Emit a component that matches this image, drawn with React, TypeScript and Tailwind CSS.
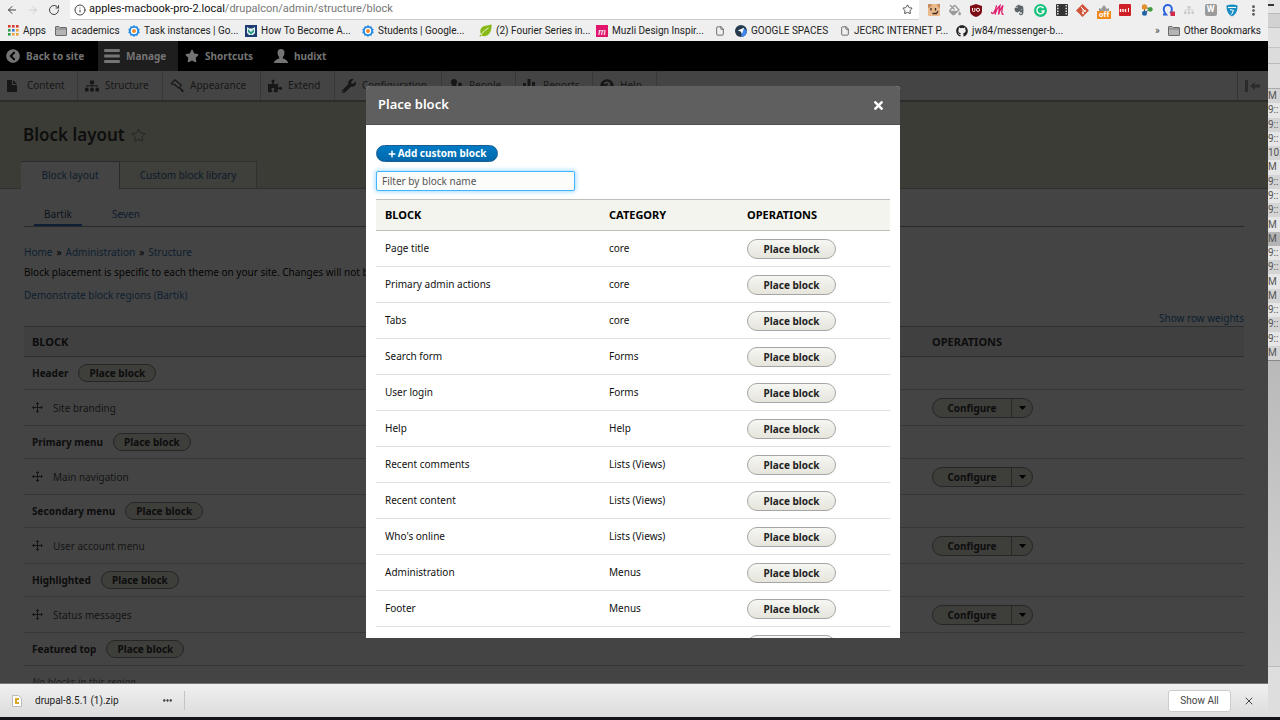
import type { ReactNode } from 'react';
import { ArrowLeft, ArrowRight, Ellipsis, EllipsisVertical, File, Info, RotateCw, Star, X } from 'lucide-react';
import {
  FaChevronCircleLeft,
  FaEvernote,
  FaFillDrip,
  FaGitAlt,
  FaGithub,
  FaPlus,
  FaPuzzlePiece,
  FaQuestionCircle,
  FaSitemap,
  FaStar,
  FaTimes,
  FaWrench,
} from 'react-icons/fa';

const FolderIcon = () => (
  <svg viewBox="0 0 12 10" className="h-2.5 w-3">
    <path d="M.5 9V1Q.5.5 1 .5h3l1 1h6q.5 0 .5.5v7q0 .5-.5.5H1Q.5 9.5.5 9z" fill="#b4b4b4" stroke="#6a6a6a" />
    <path d="M1 3h10" stroke="#6a6a6a" strokeWidth=".7" />
  </svg>
);

const AppsIcon = () => (
  <svg viewBox="0 0 11 11" className="size-[11px]">
    {['#d93c2f', '#d93c2f', '#d93c2f', '#2f9e4f', '#3c78d8', '#e8a33d', '#2f9e4f', '#e8a33d', '#e8a33d'].map((fill, i) => (
      <rect key={i} x={(i % 3) * 4} y={Math.floor(i / 3) * 4} width="2.6" height="2.6" fill={fill} />
    ))}
  </svg>
);

const GearIcon = () => (
  <svg viewBox="0 0 24 24" className="size-3">
    <path d="M12 0l3 3 4-.5 1 4 3.500 2-1.500 3.500 1.500 3.500-3.500 2-1 4-4-.5-3 3-3-3-4 .5-1-4-3.500-2L2 12 .5 8.500l3.500-2 1-4L9 3z" fill="#1e88e5" />
    <circle cx="12" cy="12" r="6.5" fill="#fff" />
    <circle cx="12" cy="12" r="4" fill="#ef8a2b" />
  </svg>
);

const OwlIcon = () => (
  <svg viewBox="0 0 12 12" className="size-3">
    <rect width="12" height="12" fill="#1d3c72" />
    <path d="M2 2l2.500 1.500h3L10 2v6L8 10H4L2 8z" fill="#e6f4f1" />
    <path d="M3 4l3 3 3-3v3L6 9.500 3 7z" fill="#2b9a87" />
  </svg>
);

const LeafIcon = () => (
  <svg viewBox="0 0 13 13" className="size-[13px]">
    <path d="M12.500.500Q13 8 9 11q-3 2-6.500.500L1 13l-.5-1L2 10.500Q-.5 4 5.500 2 9 1 12.500.500z" fill="#86b918" />
    <path d="M2 11Q5 6 9.500 4" stroke="#e9f5c8" fill="none" />
  </svg>
);

const MuzliIcon = () => (
  <span className="flex size-3 items-center justify-center bg-[#e0156b] font-['Liberation_Serif',serif] text-[11px] leading-3 text-white italic">m</span>
);

const SpacesIcon = () => (
  <svg viewBox="0 0 12 12" className="size-3">
    <circle cx="6" cy="6" r="6" fill="#263c4e" />
    <path d="M6 12a6 6 0 0 0 6-6L8 2.500z" fill="#3f86ee" />
    <path d="M2.800 5.500L9 2.800 7 9 5.700 6.500z" fill="#fff" />
  </svg>
);

const PageIcon = () => <File className="size-[10px] text-[#555]" />;

const bookmarks = [
  { label: 'Apps', icon: <AppsIcon />, width: 'w-[47px]' },
  { label: 'academics', icon: <FolderIcon />, width: 'w-[73px]' },
  { label: 'Task instances | Go...', icon: <GearIcon />, width: 'w-[117px]' },
  { label: 'How To Become A...', icon: <OwlIcon />, width: 'w-[117px]' },
  { label: 'Students | Google...', icon: <GearIcon />, width: 'w-[117px]' },
  { label: '(2) Fourier Series in...', icon: <LeafIcon />, width: 'w-[117px]' },
  { label: 'Muzli Design Inspir...', icon: <MuzliIcon />, width: 'w-[119px]' },
  { label: '', icon: <PageIcon />, width: 'w-[20px]' },
  { label: 'GOOGLE SPACES', icon: <SpacesIcon />, width: 'w-[105px]' },
  { label: 'JECRC INTERNET P...', icon: <PageIcon />, width: 'w-[116px]' },
  { label: 'jw84/messenger-b...', icon: <FaGithub className="size-3" />, width: 'w-[117px]' },
];

const extensions: ReactNode[] = [
  <svg viewBox="0 0 12 12" className="size-3">
    <rect width="12" height="12" rx="1" fill="#eab98c" />
    <path d="M0 0h4L3 3 0 4zM9 0h3v4l-2-1z" fill="#c98d5e" />
    <path d="M3 4v2.500M7.500 4v2.500M4.500 9.500h4L10 7" stroke="#3b2a22" strokeWidth="1.3" fill="none" />
  </svg>,
  <FaFillDrip className="size-3 text-[#9b9b9b]" />,
  <svg viewBox="0 0 12 13" className="h-[13px] w-3">
    <path d="M6 0l6 2v5q0 4-6 6Q0 11 0 7V2z" fill="#7d0c15" />
    <path d="M2.500 4v2.500q0 1 1.200 1t1.200-1V4" stroke="#fff" fill="none" />
    <circle cx="8" cy="5.8" r="1.6" stroke="#fff" fill="none" />
  </svg>,
  <svg viewBox="0 0 13 12" className="h-3 w-[13px]">
    <path d="M.5 8Q1 10.500 2.500 9 5 6 5.500 1.500 4.500 5 4 10.500 6 4 9 1.500 8 5 7.500 10.500 9 5 12 1.500 10.500 6 11 9.500q.5 1.500 1.500.500" stroke="#e0206f" strokeWidth="1.3" fill="none" />
  </svg>,
  <FaEvernote className="size-3 text-[#5b6469]" />,
  <svg viewBox="0 0 13 13" className="size-[13px]">
    <circle cx="6.5" cy="6.5" r="6.5" fill="#15c27c" />
    <path d="M9.500 4.200A3.600 3.600 0 1 0 10 7H7.500" stroke="#fff" strokeWidth="1.4" fill="none" />
  </svg>,
  <svg viewBox="0 0 12 12" className="size-3">
    <rect width="12" height="12" rx="1" fill="#333" />
    <path d="M1.800 1v10M10.200 1v10" stroke="#fff" strokeWidth="1.3" strokeDasharray="1.5 1.2" />
  </svg>,
  <svg viewBox="0 0 13 13" className="size-[13px]">
    <path d="M6.500 0L13 6.500 6.500 13 0 6.500z" fill="#d0533a" />
    <path d="M5 3l2 2v4.500M7 5l2 2" stroke="#fff" fill="none" />
    <circle cx="7" cy="9.3" r="1" fill="#fff" />
    <circle cx="9" cy="7" r="1" fill="#fff" />
  </svg>,
  <span className="flex flex-col items-center pt-1">
    <svg viewBox="0 0 10 6" className="h-1.5 w-2.5">
      <path d="M0 6V3l2 1 1.500-2L5 0l1.500 2L8 4l2-1v3z" fill="#999" />
    </svg>
    <span className="bg-[#f28a1b] px-0.5 text-[8px] leading-2 font-bold text-white">off</span>
  </span>,
  <svg viewBox="0 0 12 12" className="size-3">
    <rect width="12" height="12" rx="1" fill="#cf2027" />
    <path d="M1.500 5v3M4 5v3M6.500 5v3" stroke="#fff" strokeWidth="1.4" />
    <path d="M9.500 4v4" stroke="#fff" />
  </svg>,
  <svg viewBox="0 0 12 12" className="size-3">
    <path d="M3.500 3v6L9 5z" stroke="#555" fill="none" />
    <circle cx="3.5" cy="3" r="2.7" fill="#e2902c" />
    <circle cx="9.3" cy="5.3" r="2.4" fill="#3f9a44" />
    <circle cx="3.5" cy="9.2" r="2.5" fill="#2364a8" />
  </svg>,
  <svg viewBox="0 0 13 12" className="h-3 w-[13px]">
    <path d="M1 10.500h3Q1.500 7.500 1.800 5a4 4 0 0 1 8 0q.2 2-1.500 4.500" stroke="#2a62e0" strokeWidth="2" fill="none" />
    <rect x="8.5" y="7.5" width="4.5" height="4.5" fill="#d02a4a" />
  </svg>,
  <FaSitemap className="size-[10px] text-[#c9c9c9]" />,
  <span className="flex size-3 items-center justify-center rounded-xs bg-[#9b9b9b] text-[9px] font-bold text-white">W</span>,
  <svg viewBox="0 0 12 13" className="h-[13px] w-3">
    <path d="M.5 1.500Q6-.5 11.500 1.500 12 9 6 12.500 0 9 .5 1.500z" fill="#1b8fc4" />
    <path d="M2 3.500h8M4 5.500l3.500 1-2 4" stroke="#fff" fill="none" />
  </svg>,
  <EllipsisVertical className="size-[13px] text-[#444]" strokeWidth={3} />,
];

const ContentIcon = () => (
  <svg viewBox="0 0 10 12" className="h-3 w-2.5" fill="currentColor">
    <path d="M0 0h5v5h5v7H0zM6 0l4 4H6z" />
  </svg>
);

const MenuIcon = () => (
  <svg viewBox="0 0 16 14" className="h-[14px] w-4" fill="currentColor">
    <path d="M1 0h14q1 0 1 1.500T15 3H1Q0 3 0 1.500T1 0zM1 5.500h14q1 0 1 1.500t-1 1.500H1Q0 8.500 0 7t1-1.500zM1 11h14q1 0 1 1.500T15 14H1q-1 0-1-1.500T1 11z" />
  </svg>
);

const PaintIcon = () => (
  <svg viewBox="0 0 14 14" className="size-[14px]" fill="currentColor">
    <path d="M5 0l7 6-3 4-2.500-2L4 6 0 5zM5 1.800L2 4.600l3 .400 4 3.600L10.400 6.200z" />
    <path d="M9.500 9.500l1-1L14 12l-1.500 1.500z" />
  </svg>
);

const PeopleIcon = () => (
  <svg viewBox="0 0 14 14" className="size-[14px]" fill="currentColor">
    <circle cx="5" cy="3" r="3" />
    <path d="M3.500 5h3l3 6v3H1v-3z" />
    <circle cx="11" cy="5.5" r="2" />
    <path d="M10 8h2.500l1.500 3v3h-3z" />
  </svg>
);

const ChartIcon = () => (
  <svg viewBox="0 0 12 14" className="h-[14px] w-3" fill="currentColor">
    <path d="M0 4h3v10H0zM4.500 0h3v14h-3zM9 3h3v11H9z" />
  </svg>
);

const UserIcon = () => (
  <svg viewBox="0 0 14 14" className="size-[14px]" fill="currentColor">
    <path d="M7 0q3.500 0 3.500 3.800Q10.500 7 8.800 8.300v1.200Q14 11 14 14H0q0-3 5.200-4.500V8.300Q3.500 7 3.500 3.800 3.500 0 7 0z" />
  </svg>
);

const tray = [
  { label: 'Content', icon: <ContentIcon />, width: 'w-[78px]' },
  { label: 'Structure', icon: <FaSitemap className="size-[14px]" />, width: 'w-[85px]' },
  { label: 'Appearance', icon: <PaintIcon />, width: 'w-[98px]' },
  { label: 'Extend', icon: <FaPuzzlePiece className="size-[14px]" />, width: 'w-[74px]' },
  { label: 'Configuration', icon: <FaWrench className="size-[14px]" />, width: 'w-[107px]' },
  { label: 'People', icon: <PeopleIcon />, width: 'w-[74px]' },
  { label: 'Reports', icon: <ChartIcon />, width: 'w-[77px]' },
  { label: 'Help', icon: <FaQuestionCircle className="size-[14px]" />, width: 'w-[64px]' },
];

const regions = [
  { name: 'Header', block: 'Site branding' },
  { name: 'Primary menu', block: 'Main navigation' },
  { name: 'Secondary menu', block: 'User account menu' },
  { name: 'Highlighted', block: 'Status messages' },
  { name: 'Featured top', block: null },
];

const blocks = [
  ['Page title', 'core'],
  ['Primary admin actions', 'core'],
  ['Tabs', 'core'],
  ['Search form', 'Forms'],
  ['User login', 'Forms'],
  ['Help', 'Help'],
  ['Recent comments', 'Lists (Views)'],
  ['Recent content', 'Lists (Views)'],
  ["Who's online", 'Lists (Views)'],
  ['Administration', 'Menus'],
  ['Footer', 'Menus'],
  ['', ''],
];

const times = ['M', '9::', '9::', '9::', '10:', 'M', '9::', '9::', '9::', 'M', 'M', '9::', '9::', 'M', 'M', '9::', '9::', '9::', 'M'];

const BrowserBar = () => (
  <header className="shrink-0 bg-[#efefef] text-[10px] text-[#222]">
    <div className="flex h-5 items-center">
      <nav className="flex w-[70px] items-center gap-[9px] pl-1.5">
        <button aria-label="Back"><ArrowLeft className="size-3 text-[#444]" /></button>
        <button aria-label="Forward"><ArrowRight className="size-3 text-[#ccc]" /></button>
        <button aria-label="Reload"><RotateCw className="size-3 text-[#444]" /></button>
      </nav>
      <div className="flex h-5 flex-1 items-center gap-[3px] rounded-b-xs border-b border-[#ccc] bg-white pr-1.5 pl-1">
        <Info className="size-3 text-[#444]" />
        <p className="flex-1 text-[11px] text-[#777]">
          <span className="text-[#111]">apples-macbook-pro-2.local</span>/drupalcon/admin/structure/block
        </p>
        <Star className="size-[11px] text-[#444]" />
      </div>
      <div className="grid w-[349px] grid-cols-16 pr-1 pl-1">
        {extensions.map((icon, i) => (
          <span key={i} className="flex h-[18px] items-center justify-center">{icon}</span>
        ))}
      </div>
    </div>
    <nav className="flex h-[21px] items-center pl-2">
      {bookmarks.map((item, i) => (
        <a key={i} href="#" className={`flex shrink-0 items-center gap-1 whitespace-nowrap ${item.width}`}>
          {item.icon}
          {item.label}
        </a>
      ))}
      <span className="ml-auto pr-2 text-[#444]">»</span>
      <a href="#" className="flex items-center gap-1 pr-[7px]">
        <FolderIcon />
        Other Bookmarks
      </a>
    </nav>
  </header>
);

const Toolbar = () => (
  <nav className="flex h-[30px] items-center bg-black text-[10px] font-bold text-[#747474]">
    <a href="#" className="flex w-[98px] items-center gap-1.5 pl-1.5">
      <FaChevronCircleLeft className="size-[14px]" />
      Back to site
    </a>
    <a href="#" className="flex h-full w-20 items-center gap-1.5 bg-[#1e1e1e] pl-1.5">
      <MenuIcon />
      Manage
    </a>
    <a href="#" className="flex w-24 items-center gap-1.5 pl-[7px]">
      <FaStar className="size-[14px]" />
      Shortcuts
    </a>
    <a href="#" className="flex items-center gap-1.5">
      <UserIcon />
      hudixt
    </a>
  </nav>
);

const Tray = () => (
  <nav className="flex h-[31px] border-b-2 border-[#2c2c2a] bg-[#444] text-[10px] text-[#171717]">
    {tray.map((item) => (
      <a key={item.label} href="#" className={`flex shrink-0 items-center border-r border-[#383838] pl-[7px] ${item.width}`}>
        <span className="flex w-5">{item.icon}</span>
        {item.label}
      </a>
    ))}
    <button aria-label="Vertical orientation" className="ml-auto flex w-[31px] items-center border-l border-[#333] pl-[7px] text-[#2b2b2b]">
      <svg viewBox="0 0 15 12" className="h-3 w-[15px]" fill="currentColor">
        <path d="M0 0h3v12H0zM5 6l5-4v2.500h5v3h-5V10z" />
      </svg>
    </button>
  </nav>
);

const DragHandle = () => (
  <svg viewBox="0 0 11 11" className="size-[11px]" stroke="#161616" fill="none">
    <path d="M5.500 1v9M1 5.500h9M4 2l1.500-1.500L7 2M4 9l1.500 1.500L7 9M2 4L.5 5.500 2 7M9 4l1.500 1.500L9 7" />
  </svg>
);

const BlockLayout = () => (
  <main>
    <section className="h-[87px] border-b border-[#303030] bg-[#3c3c36] px-[21px] pt-[21px]">
      <h1 className="flex items-center gap-1.5 pl-0.5 text-[17px] leading-6 font-semibold text-[#0e0e0e]">
        Block layout
        <Star className="size-[15px] text-[#161616]" strokeWidth={1} />
      </h1>
      <div className="mt-[14px] flex text-[10px] text-[#0d1b2b]">
        <a href="#" className="flex h-[28px] w-[99px] items-center justify-center rounded-tl-xs border-t border-r border-[#2b2b2b] bg-[#444]">Block layout</a>
        <a href="#" className="flex h-[27px] w-[137px] items-center justify-center border-t border-r border-[#303030] bg-[#3f3f3b]">Custom block library</a>
      </div>
    </section>
    <div className="px-6 text-[10px] leading-4">
      <nav className="flex h-[38px] items-end border-b border-[#292929] pl-2.5 text-[#0d1b2b]">
        <a href="#" className="flex h-6 w-12 justify-center border-b-2 border-[#0d2033] pt-1 text-[#0b121b]">Bartik</a>
        <a href="#" className="ml-5 flex h-6 w-12 justify-center pt-1">Seven</a>
      </nav>
      <nav className="mt-[17px] flex gap-1 text-black">
        <a href="#" className="text-[#0d1f30]">Home</a>»
        <a href="#" className="text-[#0d1f30]">Administration</a>»
        <a href="#" className="text-[#0d1f30]">Structure</a>
      </nav>
      <p className="mt-1 text-[#050505]">Block placement is specific to each theme on your site. Changes will not be saved until you click Save blocks.</p>
      <a href="#" className="mt-[7px] block text-[#0d1f30]">Demonstrate block regions (Bartik)</a>
      <div className="mt-[7px] flex justify-end">
        <a href="#" className="text-[#0d1f30]">Show row weights</a>
      </div>
      <table className="w-full table-fixed border-collapse text-left text-[#0d0d0d]">
        <thead>
          <tr className="h-[30px] border-y border-[#2e2e2e] bg-[#404040] text-[11px]">
            <th className="pl-2">BLOCK</th>
            <th className="w-[312px]">OPERATIONS</th>
          </tr>
        </thead>
        <tbody>
          {regions.map((region) => (
            <RegionRows key={region.name} name={region.name} block={region.block} />
          ))}
        </tbody>
      </table>
    </div>
  </main>
);

const RegionRows = ({ name, block }: { name: string; block: string | null }) => (
  <>
    <tr className="h-[33px] border-b border-[#373737]">
      <td colSpan={2} className="pl-2 font-bold">
        <div className="flex items-center gap-2.5">
          {name}
          <button className="h-[18px] w-[78px] rounded-full border border-[#262626] bg-[#3e3e3b] leading-4 font-bold">Place block</button>
        </div>
      </td>
    </tr>
    {block ? (
      <tr className="h-9 border-b border-[#373737]">
        <td className="pl-2 text-[#141414]">
          <div className="flex items-center gap-2.5">
            <DragHandle />
            {block}
          </div>
        </td>
        <td>
          <div className="flex h-5 w-[101px] rounded-full border border-[#262626] bg-[#3e3e3b]">
            <button className="flex-1 border-r border-[#262626] font-bold">Configure</button>
            <button aria-label="More operations" className="flex w-5 items-center justify-center">
              <svg viewBox="0 0 7 4" className="h-1 w-[7px]"><path d="M0 0h7L3.500 4z" /></svg>
            </button>
          </div>
        </td>
      </tr>
    ) : (
      <tr className="h-[33px] border-b border-[#373737]">
        <td colSpan={2} className="pl-2 text-[#1c1c1c] italic">No blocks in this region</td>
      </tr>
    )}
  </>
);

const PlaceBlockDialog = () => (
  <section role="dialog" aria-label="Place block" className="flex h-full w-[534px] flex-col overflow-hidden rounded-t-[4px] bg-white text-[10px] text-[#111]">
    <div className="flex h-[39px] shrink-0 items-center justify-between border-b border-[#505050] bg-[#5f5f5f] pr-[15px] pl-3 text-white">
      <h2 className="text-[13px] font-semibold">Place block</h2>
      <button aria-label="Close"><FaTimes className="size-[13px]" /></button>
    </div>
    <div className="min-h-0 flex-1 overflow-hidden px-2.5 pt-5">
      <button className="flex h-[17px] w-[122px] items-center justify-center gap-0.5 rounded-full border border-[#1e5c90] bg-linear-to-b from-[#007bc6] to-[#0068ab] text-[10px] font-bold text-white">
        <FaPlus className="size-2" />
        Add custom block
      </button>
      <input
        aria-label="Filter by block name"
        placeholder="Filter by block name"
        className="mt-[9px] block h-5 w-[199px] rounded-xs border border-[#40b6ff] bg-[#fcfcfa] px-[5px] shadow-[0_0_4px_1px_#a5dcff] outline-none placeholder:text-[#555]"
      />
      <table className="mt-2 w-full table-fixed border-collapse text-left">
        <thead>
          <tr className="h-[31px] border-y border-[#bfbfba] bg-[#f3f4ee] text-[11px] text-black">
            <th className="w-[224px] pl-[9px]">BLOCK</th>
            <th className="w-[138px] pl-[9px]">CATEGORY</th>
            <th className="pl-[9px]">OPERATIONS</th>
          </tr>
        </thead>
        <tbody>
          {blocks.map(([name, category], i) => (
            <tr key={i} className="h-9 border-b border-[#e0e0de]">
              <td className="pl-[9px]">{name}</td>
              <td className="pl-[9px]">{category}</td>
              <td className="pl-[9px]">
                <button className="block h-5 w-[89px] rounded-full border border-[#a6a6a6] bg-linear-to-b from-[#f6f6f3] to-[#e5e5dc] leading-4 font-bold text-[#222]">Place block</button>
              </td>
            </tr>
          ))}
        </tbody>
      </table>
    </div>
  </section>
);

const DownloadBar = () => (
  <footer className="flex h-[34px] shrink-0 items-center rounded-b-[4px] border-t border-[#777] bg-linear-to-b from-[#f0f0f0] to-[#dcdcdc] pr-[13px] pl-3 text-[10px] text-[#222]">
    <svg viewBox="0 0 10 12" className="h-3 w-2.5">
      <path d="M.5.5h6l3 3v8h-9z" fill="#fff" stroke="#bbb" />
      <path d="M3 3h4v2H5v2h2v2H3z" fill="#d9a827" />
    </svg>
    <span className="w-[140px] pl-[13px]">drupal-8.5.1 (1).zip</span>
    <button aria-label="Download options" className="w-[23px] border-r border-[#c4c4c4] py-1">
      <Ellipsis className="size-[11px]" strokeWidth={3} />
    </button>
    <button className="mr-3 ml-auto h-[22px] w-[63px] rounded-[3px] border border-[#ccc] bg-white text-[#444]">Show All</button>
    <button aria-label="Close downloads bar"><X className="size-3 text-[#444]" /></button>
  </footer>
);

const BackgroundWindow = () => (
  <aside className="flex w-3 shrink-0 flex-col overflow-hidden bg-linear-to-b from-[#999] to-[#dadada] text-[10px] text-[#555]">
    <div className="h-[7px] shrink-0 bg-[#e4e4e4] pt-1"><div className="h-0.5 w-1.5 bg-[#333]" /></div>
    <div className="h-[7px] shrink-0 border-b border-[#bbb] bg-[#e4e4e4]" />
    <div className="h-[14px] shrink-0 border-b border-[#bbb] bg-[#d2d2d2]" />
    <div className="h-5 shrink-0 border-b border-[#c4c4c4] bg-[#e0e0e0]" />
    <div className="h-4 shrink-0 border-b border-[#bbb] bg-[#dcdcdc]" />
    <div className="h-[25px] shrink-0 border-b border-[#aaa] bg-[#ddd]" />
    <div className="flex h-[272px] shrink-0 flex-col border-b border-[#888]">
      {times.map((time, i) => (
        <span key={i} className={`flex flex-1 items-center overflow-hidden leading-3 ${i === 10 ? 'bg-[#b4b4b4]' : 'odd:bg-[#d4d4d4] even:bg-[#e6e6e6]'}`}>
          {time}
        </span>
      ))}
    </div>
    <div className="mt-auto h-[51px] shrink-0 border-t border-[#bbb] bg-[#dedede]" />
  </aside>
);

const App = () => (
  <div className="flex h-screen overflow-hidden border-b-[3px] border-[#151317] bg-[#dedede] font-[Roboto,sans-serif]">
    <div className="flex min-w-0 flex-1 flex-col">
      <BrowserBar />
      <div className="relative min-h-0 flex-1 overflow-hidden bg-[#444] font-['Noto_Sans',sans-serif]">
        <Toolbar />
        <Tray />
        <BlockLayout />
        <div className="absolute inset-0 flex justify-center py-[45px] pr-0.5">
          <PlaceBlockDialog />
        </div>
      </div>
      <DownloadBar />
    </div>
    <BackgroundWindow />
  </div>
);

export default App;
